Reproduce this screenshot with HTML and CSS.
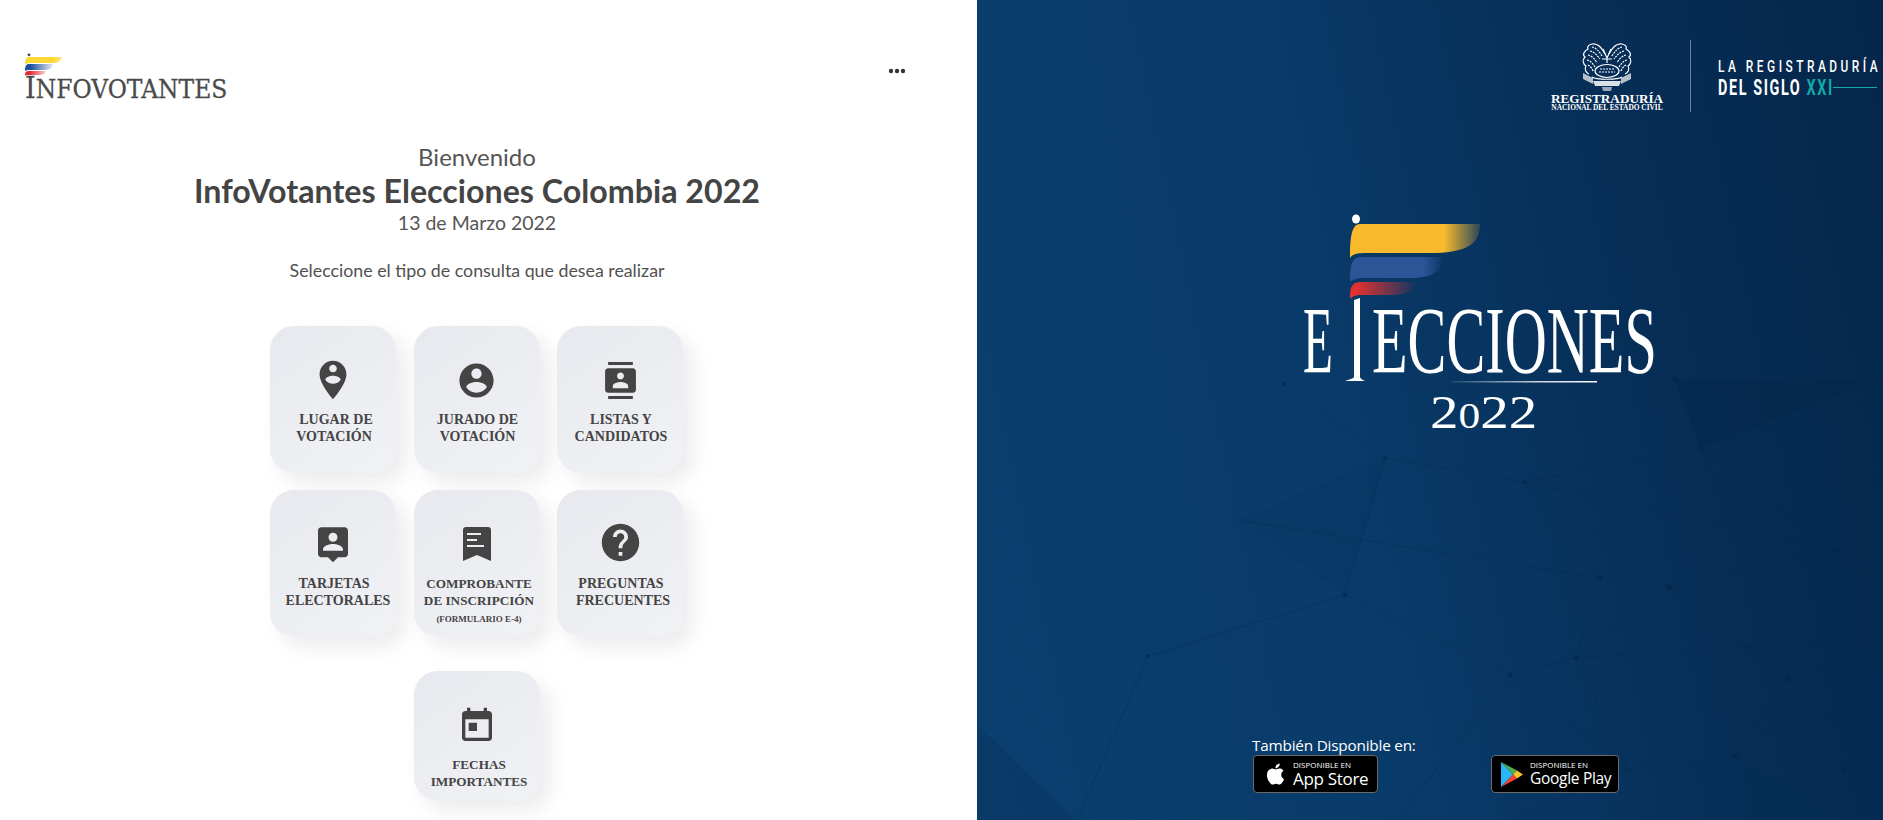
FILE: index.html
```html
<!DOCTYPE html>
<html lang="es">
<head>
    <meta charset="UTF-8">
    <title>InfoVotantes</title>
    <link rel="stylesheet" href="styles.css">
</head>
<body>
<div class="page">
    <!--panel izquierdo-->
    <div class="left">
        <div class="top">
            <div class="logo">
                <svg class="logo-flag" width="40" height="26" viewBox="0 0 40 26">
                    <defs>
                        <linearGradient id="fadeY"><stop offset="0.75" stop-color="#fdd835"/><stop offset="1" stop-color="#fdd835" stop-opacity="0.6"/></linearGradient>
                        <linearGradient id="fadeB"><stop offset="0.2" stop-color="#1f4fa0"/><stop offset="1" stop-color="#1f4fa0" stop-opacity="0.1"/></linearGradient>
                        <linearGradient id="fadeR"><stop offset="0.2" stop-color="#e2252f"/><stop offset="1" stop-color="#e2252f" stop-opacity="0.2"/></linearGradient>
                    </defs>
                    <circle cx="4" cy="1.8" r="1.4" fill="#444"/>
                    <path d="M0 12C0 6 1 4 4 4H37C36 9 32 10 25 10H5C2 10 1 11 0 12Z" fill="url(#fadeY)"/>
                    <path d="M0 18C0 13 1 11 4 11H28C28 15 24 17 19 17H5C2 17 1 17 0 18Z" fill="url(#fadeB)"/>
                    <path d="M0 23C0 19 1 18 4 18H21C20 21 17 22 14 22H3C1 22 .5 22 0 23Z" fill="url(#fadeR)"/>
                </svg>
                <div class="logo-text"><span>I</span>NFOVOTANTES</div>
            </div>
            <svg class="dots" width="18" height="6" viewBox="0 0 18 6"><circle cx="3" cy="3" r="2.2"/><circle cx="9" cy="3" r="2.2"/><circle cx="15" cy="3" r="2.2"/></svg>
        </div>

        <div class="intro">
            <div class="hello">Bienvenido</div>
            <h1>InfoVotantes Elecciones Colombia 2022</h1>
            <div class="date">13 de Marzo 2022</div>
            <p>Seleccione el tipo de consulta que desea realizar</p>
        </div>

        <div class="menu">
            <a class="card">
                <span class="ico"><svg width="46" height="46" viewBox="0 0 24 24"><path d="M12 2C8.14 2 5 5.14 5 9c0 5.25 7 13 7 13s7-7.75 7-13c0-3.86-3.14-7-7-7zm0 2c1.1 0 2 .9 2 2 0 1.11-.9 2-2 2s-2-.89-2-2c0-1.1.9-2 2-2zm0 10c-1.67 0-3.14-.85-4-2.15.02-1.32 2.67-2.05 4-2.05s3.98.73 4 2.05c-.86 1.3-2.33 2.15-4 2.15z"/></svg></span>
                <span class="label shift">LUGAR DE<br><span class="l">VOTACIÓN</span></span>
            </a>
            <a class="card">
                <span class="ico"><svg width="41" height="41" viewBox="0 0 24 24"><path d="M12 2C6.48 2 2 6.48 2 12s4.48 10 10 10 10-4.48 10-10S17.52 2 12 2zm0 3c1.66 0 3 1.34 3 3s-1.34 3-3 3-3-1.34-3-3 1.34-3 3-3zm0 14.2c-2.5 0-4.71-1.28-6-3.22.03-1.99 4-3.08 6-3.08 1.99 0 5.97 1.09 6 3.08-1.29 1.94-3.5 3.22-6 3.22z"/></svg></span>
                <span class="label">JURADO DE<br>VOTACIÓN</span>
            </a>
            <a class="card">
                <span class="ico"><svg width="37" height="37" viewBox="0 0 24 24"><path d="M20 0H4v2h16V0zM4 24h16v-2H4v2zM20 4H4c-1.1 0-2 .9-2 2v12c0 1.1.9 2 2 2h16c1.1 0 2-.9 2-2V6c0-1.1-.9-2-2-2zm-8 2.75c1.24 0 2.25 1.01 2.25 2.25s-1.01 2.25-2.25 2.25S9.75 10.24 9.75 9 10.76 6.75 12 6.75zM17 17H7v-1.5c0-1.67 3.33-2.5 5-2.5s5 .83 5 2.5V17z"/></svg></span>
                <span class="label">LISTAS Y<br>CANDIDATOS</span>
            </a>
            <a class="card">
                <span class="ico"><svg width="40" height="40" viewBox="0 0 24 24"><path d="M19 2H5c-1.11 0-2 .9-2 2v14c0 1.1.89 2 2 2h4l3 3 3-3h4c1.1 0 2-.9 2-2V4c0-1.1-.9-2-2-2zm-7 3.3c1.49 0 2.7 1.21 2.7 2.7 0 1.49-1.21 2.7-2.7 2.7-1.49 0-2.7-1.21-2.7-2.7 0-1.49 1.21-2.7 2.7-2.7zM18 16H6v-.9c0-2 4-3.1 6-3.1s6 1.1 6 3.1v.9z"/></svg></span>
                <span class="label shift"><span class="l">TARJETAS</span><br><span class="r">ELECTORALES</span></span>
            </a>
            <a class="card">
                <span class="ico"><svg width="28" height="34" viewBox="0 0 28 34"><path fill-rule="evenodd" d="M3 0H25A3 3 0 0 1 28 3V34L14 28L0 34V3A3 3 0 0 1 3 0ZM4 6V8H18V6ZM4 12V14H14V12ZM4 18V20H21V18Z"/></svg></span>
                <span class="label sm">COMPROBANTE<br>DE INSCRIPCIÓN<br><small>(FORMULARIO E-4)</small></span>
            </a>
            <a class="card">
                <span class="ico up"><svg width="45" height="45" viewBox="0 0 24 24"><path d="M12 2C6.48 2 2 6.48 2 12s4.48 10 10 10 10-4.48 10-10S17.52 2 12 2zm1 17h-2v-2h2v2zm2.07-7.75l-.9.92C13.45 12.9 13 13.5 13 15h-2v-.5c0-1.1.45-2.1 1.17-2.83l1.24-1.26c.37-.36.59-.86.59-1.41 0-1.1-.9-2-2-2s-2 .9-2 2H8c0-2.21 1.79-4 4-4s4 1.79 4 4c0 .88-.36 1.68-.93 2.25z"/></svg></span>
                <span class="label shift"><span class="l">PREGUNTAS</span><br>FRECUENTES</span>
            </a>
            <a class="card last">
                <span class="ico down"><svg width="40" height="40" viewBox="0 0 24 24"><path d="M19 3h-1V1h-2v2H8V1H6v2H5c-1.11 0-1.99.9-1.99 2L3 19c0 1.1.89 2 2 2h14c1.1 0 2-.9 2-2V5c0-1.1-.9-2-2-2zm0 16H5V8h14v11zM7 10h5v5H7z"/></svg></span>
                <span class="label sm">FECHAS<br>IMPORTANTES</span>
            </a>
        </div>
    </div>

    <!--panel derecho-->
    <div class="right">
        <svg class="net" viewBox="0 0 906 820" preserveAspectRatio="none">
            <polygon points="698,379 906,379 724,447" fill="#04264a" fill-opacity="0.4"/>
            <polygon points="0,725 98,820 0,820" fill="#04264a" fill-opacity="0.18"/>
            <g fill="#05305a" fill-opacity="0.22">
                <polygon points="408,458 261,520 368,595"/>
                <polygon points="758,756 640,775 735,820 870,820"/>
            </g>
            <g fill="none" stroke="#05284e" stroke-width="1" stroke-opacity="0.35">
                <polyline points="408,458 547,482 857,551 724,447 698,379"/>
                <polyline points="261,520 622,578 692,587 857,551 906,540"/>
                <polyline points="408,458 368,595 171,656 100,820"/>
                <polyline points="547,482 692,587 811,679 724,447"/>
                <polyline points="724,447 547,482 622,578 599,658 533,675 368,595"/>
                <polyline points="692,587 599,658 906,638 811,679 758,756"/>
                <polyline points="533,675 651,769 758,756 906,640"/>
                <polyline points="599,658 651,769 533,820"/>
                <polyline points="533,675 420,820"/>
                <polyline points="857,551 906,470"/>
                <polyline points="811,679 906,760"/>
                <polyline points="724,447 906,400"/>
                <polyline points="307,384 408,458"/>
                <polyline points="867,771 906,700"/>
            </g>
            <g fill="#04264a" fill-opacity="0.6">
                <circle cx="698" cy="379" r="2.5"/><circle cx="724" cy="447" r="2.5"/><circle cx="408" cy="458" r="2"/>
                <circle cx="547" cy="482" r="2"/><circle cx="857" cy="551" r="3"/><circle cx="622" cy="578" r="2.5"/>
                <circle cx="692" cy="587" r="2.5"/><circle cx="368" cy="595" r="2"/><circle cx="599" cy="658" r="2.5"/>
                <circle cx="533" cy="675" r="2.5"/><circle cx="811" cy="679" r="3"/><circle cx="758" cy="756" r="2.5"/>
                <circle cx="867" cy="771" r="3"/><circle cx="307" cy="384" r="2"/><circle cx="171" cy="656" r="2"/>
            </g>
        </svg>

        <div class="brand">
            <div class="reg">
                <svg class="emblem" width="56" height="50" viewBox="0 0 54 50">
                    <g fill="none" stroke="#fff" stroke-width="1.2">
                        <path d="M25 12C22 6 18 1 12 2C8 3 7 5 8 7C4 9 2 13 5 15C2 18 3 22 6 24C4 27 6 31 9 32"/>
                        <path d="M29 12C32 6 36 1 42 2C46 3 47 5 46 7C50 9 52 13 49 15C52 18 51 22 48 24C50 27 48 31 45 32"/>
                        <path d="M12 5C16 6 19 9 22 14M10 9C14 10 17 13 20 17M8 13C12 14 15 17 17 21M7 18C11 19 13 22 15 25M8 23C10 24 12 26 13 29" stroke-dasharray="2 1"/>
                        <path d="M42 5C38 6 35 9 32 14M44 9C40 10 37 13 34 17M46 13C42 14 39 17 37 21M47 18C43 19 41 22 39 25M46 23C44 24 42 26 41 29" stroke-dasharray="2 1"/>
                        <path d="M23 7L27 16L31 7M27 16V21M22 17H32"/>
                        <ellipse cx="27" cy="29" rx="12" ry="6.5"/>
                        <path d="M20 27H34M19 30H35" stroke-dasharray="2 1"/>
                        <path d="M12 35C16 38 38 38 42 35"/>
                    </g>
                    <path d="M3 31L13 36V42L3 37ZM51 31L41 36V42L51 37Z" fill="#fff" fill-opacity="0.7"/>
                    <path d="M13 39H41L39 44H15Z" fill="#fff" fill-opacity="0.85"/>
                    <path d="M22 45H32L31 49H23Z" fill="#fff" fill-opacity="0.6"/>
                </svg>
                <div class="reg-name">REGISTRADURÍA</div>
                <div class="reg-sub">NACIONAL DEL ESTADO CIVIL</div>
            </div>
            <div class="brand-text">
                <svg width="162" height="72" viewBox="0 0 162 72">
                    <text class="b1" transform="translate(1 32) scale(0.7 1)">LA REGISTRADURÍA</text>
                    <text class="b2" transform="translate(1 55) scale(0.64 1)">DEL SIGLO <tspan class="xxi">XXI</tspan></text>
                    <rect x="116" y="47" width="44" height="1" fill="#14a8a6"/>
                </svg>
            </div>
        </div>

        <svg class="elec" width="360" height="226" viewBox="0 0 360 226">
            <defs>
                <linearGradient id="bigY"><stop offset="0.72" stop-color="#f9bb2d"/><stop offset="1" stop-color="#f9bb2d" stop-opacity="0.15"/></linearGradient>
                <linearGradient id="bigB"><stop offset="0.8" stop-color="#2c5597"/><stop offset="1" stop-color="#2c5597" stop-opacity="0.1"/></linearGradient>
                <linearGradient id="bigR"><stop offset="0.1" stop-color="#e1322f"/><stop offset="1" stop-color="#e1322f" stop-opacity="0"/></linearGradient>
                <linearGradient id="line"><stop offset="0" stop-color="#fff" stop-opacity="0.1"/><stop offset="0.6" stop-color="#fff" stop-opacity="0.8"/><stop offset="1" stop-color="#fff"/></linearGradient>
            </defs>
            <!--origen x=1300, y=210 en la captura-->
            <ellipse cx="56" cy="9" rx="4" ry="4.5" fill="#fff"/>
            <path d="M50 48C50 26 52 14 60 14H180C180 32 170 42 135 43H66C58 43 52 44 50 48Z" fill="url(#bigY)"/>
            <path d="M50 72C50 54 52 47 62 47H142C142 62 132 68 110 68H64C57 68 53 69 50 72Z" fill="url(#bigB)"/>
            <path d="M50 89C50 76 52 72 62 72H118C116 82 104 85 88 85H60C56 85 53 86 50 89Z" fill="url(#bigR)"/>
            <path d="M54 90L60 88V167C60 168 62 170 65 171H45C49 170 54 168 54 167Z" fill="#fff"/>
            <text class="elec-t" transform="translate(3 163) scale(0.51 1)">E</text>
            <text class="elec-t" transform="translate(72 163) scale(0.607 1)">ECCIONES</text>
            <rect x="152" y="171" width="145" height="1.5" fill="url(#line)"/>
            <text class="elec-y" transform="translate(130 218) scale(1.24 1)">2<tspan font-size="35">0</tspan>22</text>
        </svg>

        <div class="stores">
            <div class="stores-title">También Disponible en:</div>
            <div class="badges">
                <a class="badge apple">
                    <svg width="21" height="24" viewBox="0 0 24 24"><path fill="#fff" d="M12.152 6.896c-.948 0-2.415-1.078-3.96-1.04-2.04.027-3.91 1.183-4.961 3.014-2.117 3.675-.546 9.103 1.519 12.09 1.013 1.454 2.208 3.09 3.792 3.039 1.52-.065 2.09-.987 3.935-.987 1.831 0 2.35.987 3.96.948 1.637-.026 2.676-1.48 3.676-2.948 1.156-1.688 1.636-3.325 1.662-3.415-.039-.013-3.182-1.221-3.22-4.857-.026-3.04 2.48-4.494 2.597-4.559-1.429-2.09-3.623-2.324-4.39-2.376-2-.156-3.675 1.09-4.61 1.09zM15.53 3.83c.843-1.012 1.4-2.427 1.245-3.83-1.207.052-2.662.805-3.532 1.818-.78.896-1.454 2.338-1.273 3.714 1.338.104 2.715-.688 3.559-1.701"/></svg>
                    <span class="badge-txt"><small>DISPONIBLE EN</small><b>App Store</b></span>
                </a>
                <a class="badge google">
                    <svg width="22" height="25" viewBox="0 0 22 25">
                        <polygon points="0,0 12,12.5 0,25" fill="#29b6f6"/>
                        <polygon points="0,0 16,8.5 12,12.5" fill="#4caf50"/>
                        <polygon points="0,25 16,16.5 12,12.5" fill="#f44336"/>
                        <polygon points="16,8.5 22,12.5 16,16.5 12,12.5" fill="#fbc02d"/>
                    </svg>
                    <span class="badge-txt"><small>DISPONIBLE EN</small><b>Google Play</b></span>
                </a>
            </div>
        </div>
    </div>
</div>
</body>
</html>
```

FILE: styles.css
```css
* {
    padding: 0;
    margin: 0;
    box-sizing: border-box;
}

html, body {
    height: 100%;
    overflow: hidden;
    background: #fff;
}

.page {
    display: flex;
    height: 820px;
}

.left {
    width: 977px;
    height: 820px;
    overflow: hidden;
    color: #444;
    font-family: Lato, "Liberation Sans", sans-serif;
}

.top {
    display: flex;
    justify-content: space-between;
    align-items: flex-start;
    height: 127px;
    padding: 53px 71px 0 25px;
}

.logo-flag {
    display: block;
    margin-bottom: -3px;
}

.logo-text {
    font-family: "DejaVu Serif", serif;
    font-size: 26px;
    line-height: 24px;
    color: #4a4a4a;
    white-space: nowrap;
    -webkit-text-stroke: 0.3px #4a4a4a;
    transform: scaleX(0.9);
    transform-origin: left;
}

.logo-text span {
    font-size: 30px;
}

.dots {
    margin-top: 15px;
    fill: #333;
}

.intro {
    width: 954px;
    text-align: center;
}

.hello {
    font-size: 24px;
    line-height: 29px;
    margin: 15px 0 1px;
    color: #555;
}

h1 {
    font-size: 32.2px;
    line-height: 38px;
    font-weight: bold;
}

.date {
    font-size: 19.5px;
    line-height: 24px;
    margin-top: 1px;
    color: #555;
}

.intro p {
    font-size: 17.8px;
    line-height: 24px;
    margin-top: 23px;
    color: #505050;
}

.menu {
    display: grid;
    grid-template-columns: repeat(3, 126px);
    grid-auto-rows: 147px;
    column-gap: 17.5px;
    row-gap: 17px;
    width: 413px;
    margin: 44px 0 0 270px;
}

.card {
    display: block;
    padding-top: 31px;
    border-radius: 24px;
    background: linear-gradient(145deg, #e8e9ee, #f1f2f6);
    box-shadow: 10px 10px 20px rgba(0, 0, 0, 0.08);
    text-align: center;
}

.card.last {
    grid-column: 2;
    margin-top: 17px;
}

.ico {
    display: flex;
    justify-content: center;
    align-items: center;
    height: 46px;
    margin-bottom: 9px;
}

.ico.up {
    margin-top: -2px;
    margin-bottom: 11px;
}

.ico.down {
    margin-top: 1px;
    margin-bottom: 8px;
}

.ico svg {
    fill: #444;
}

.label {
    display: block;
    padding-left: 2px;
    font-family: "Liberation Serif", serif;
    font-size: 14px;
    font-weight: bold;
    line-height: 16.8px;
    color: #444;
    white-space: nowrap;
}

.label.shift {
    padding-left: 6px;
}

.label.sm {
    padding-left: 5px;
    font-size: 13.2px;
}

.label .l {
    padding-right: 4px;
}

.label .r {
    padding-left: 4px;
}

.label small {
    font-size: 9px;
    line-height: 17px;
}

.right {
    position: relative;
    flex: 1;
    height: 820px;
    overflow: hidden;
    color: #fff;
    background: linear-gradient(78deg, #0a3f6f 0%, #093b6a 40%, #062e57 72%, #05264a 100%);
}

.net {
    position: absolute;
    left: 0;
    top: 0;
    width: 100%;
    height: 100%;
}

.brand {
    position: relative;
    display: flex;
    justify-content: flex-end;
    height: 210px;
    padding: 40px 4px 0 0;
}

.reg {
    width: 112px;
    text-align: center;
    padding-top: 2px;
}

.emblem {
    display: block;
    margin: 0 auto 1px;
}

.reg-name {
    font-family: "Liberation Serif", serif;
    font-weight: bold;
    font-size: 13.2px;
    line-height: 11px;
    white-space: nowrap;
}

.reg-sub {
    font-family: "Liberation Serif", serif;
    font-weight: bold;
    font-size: 7.4px;
    line-height: 7px;
    white-space: nowrap;
}

.brand-text {
    height: 72px;
    margin-left: 27px;
    padding-left: 26px;
    border-left: 1px solid rgba(255, 255, 255, 0.4);
}

.b1 {
    font-family: Roboto, sans-serif;
    font-size: 17px;
    font-weight: 500;
    letter-spacing: 5px;
    fill: #fff;
}

.b2 {
    font-family: Roboto, sans-serif;
    font-size: 22.5px;
    font-weight: 700;
    letter-spacing: 2.5px;
    fill: #fff;
}

.b2 .xxi {
    fill: #14a8a6;
}

.elec {
    position: relative;
    display: block;
    margin-left: 323px;
}

.elec-t {
    font-family: "Liberation Serif", serif;
    font-size: 96px;
    fill: #fff;
}

.elec-y {
    font-family: "Liberation Serif", serif;
    font-size: 46px;
    fill: #fff;
}

.stores {
    position: relative;
    margin: 299px 0 0 275px;
}

.stores-title {
    font-family: "Open Sans", "Noto Sans", sans-serif;
    font-size: 15.3px;
    line-height: 20px;
    letter-spacing: -0.2px;
}

.badges {
    display: flex;
    gap: 113px;
    margin-left: 1px;
}

.badge {
    display: flex;
    align-items: center;
    gap: 7px;
    height: 38px;
    padding-left: 11px;
    border: 1px solid #6a6a6a;
    border-radius: 4px;
    background: #000;
    font-family: "Open Sans", "Noto Sans", sans-serif;
    white-space: nowrap;
}

.apple {
    width: 125px;
}

.google {
    width: 128px;
    padding-left: 9px;
}

.badge-txt small {
    display: block;
    font-size: 8px;
    line-height: 9px;
}

.badge-txt b {
    display: block;
    font-weight: 400;
    font-size: 17px;
    line-height: 19px;
    letter-spacing: -0.3px;
}

.google .badge-txt b {
    font-size: 15.5px;
}
```
